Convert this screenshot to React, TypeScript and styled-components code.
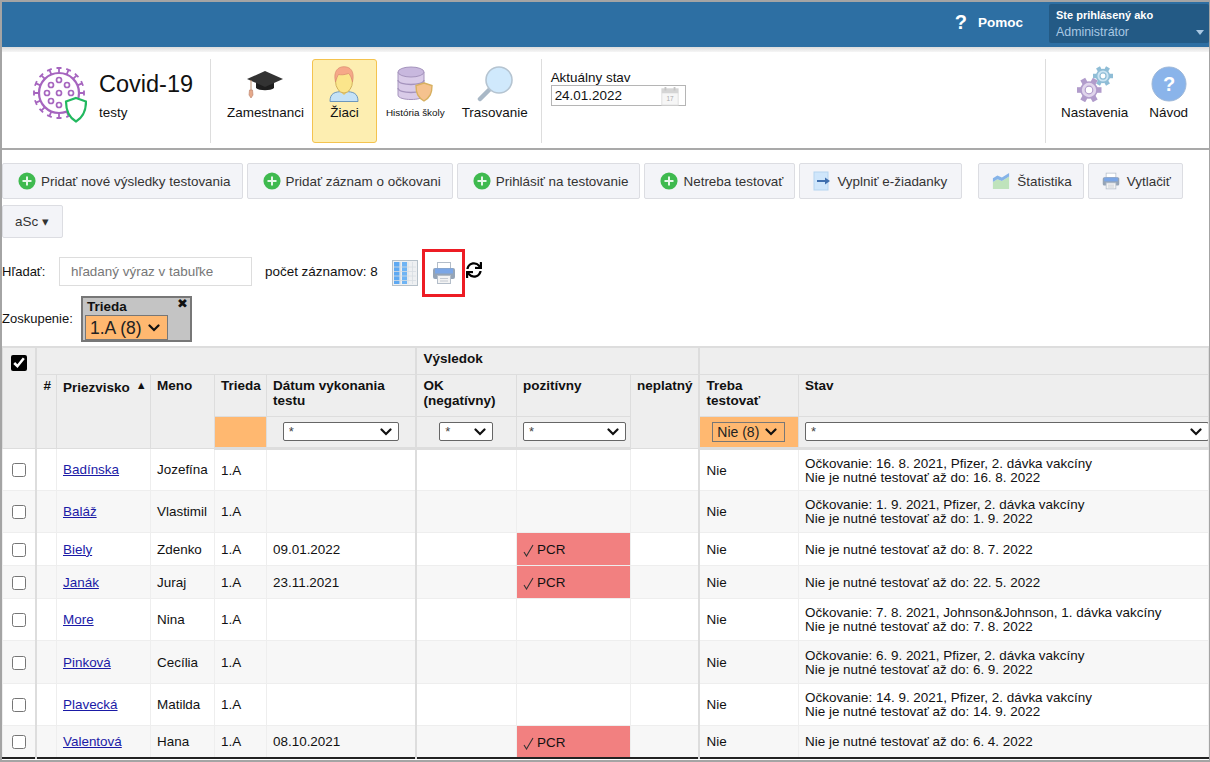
import React from "react";
import styled, { createGlobalStyle } from "styled-components";
import { FaSync } from "react-icons/fa";

const chevron = `url("data:image/svg+xml,%3Csvg xmlns='http://www.w3.org/2000/svg' width='12' height='8' viewBox='0 0 12 8'%3E%3Cpath d='M1.500 1.500L6 6l4.500-4.500' fill='none' stroke='%23111' stroke-width='2.200' stroke-linecap='round'/%3E%3C/svg%3E")`;

const Global = createGlobalStyle`
  html, body { margin: 0; padding: 0; height: 100%; overflow: hidden; background: #fff; }
  body { font-family: "Liberation Sans", Arial, sans-serif; font-size: 13.45px; color: #111; }
  * { box-sizing: border-box; }
`;

const Frame = styled.div`
  width: 1210px; height: 762px; overflow: hidden;
  border-top: 2px solid #a4a4a4; border-left: 2px solid #a4a4a4; border-right: 1px solid #a4a4a4; border-bottom: 2px solid #a4a4a4;
  display: flex; flex-direction: column; background: #fff;
`;
const TopBar = styled.div`
  height: 45px; flex: none; background: #2d6fa3; display: flex; align-items: flex-start; justify-content: flex-end;
`;
const HelpLink = styled.div`
  display: flex; align-items: center; height: 41px; color: #fff; font-weight: bold; font-size: 13.5px; margin-right: 26px; gap: 11px;
`;
const HelpMark = styled.span` font-size: 20px; `;
const UserBox = styled.div`
  width: 160px; height: 39px; margin-top: 2px; background: #235a85; border-radius: 2px; padding: 4px 0 0 7px; position: relative;
`;
const UserTitle = styled.div` color: #fff; font-size: 11px; font-weight: bold; line-height: 15px; `;
const UserName = styled.div` color: #a9c8e3; font-size: 12.4px; line-height: 17px; margin-top: 1px; `;
const UserArrow = styled.span`
  position: absolute; right: 5px; bottom: 8px; width: 0; height: 0;
  border-left: 4.500px solid transparent; border-right: 4.500px solid transparent; border-top: 5px solid #a9c8e3;
`;
const TopShade = styled.div`
  height: 5px; flex: none; background: linear-gradient(#dcdcdc, #f6f6f6);
`;
const Header = styled.div`
  height: 98px; flex: none; display: flex; padding: 7px 0 5px 0; border-bottom: 2px solid #a9a9a9;
`;
const LogoBlock = styled.div`
  width: 209px; flex: none; border-right: 1px solid #ddd; display: flex; padding: 8px 0 0 31px; gap: 12px;
`;
const LogoText = styled.div` display: flex; flex-direction: column; `;
const AppTitle = styled.div` font-size: 23.5px; line-height: 28px; margin-top: 3px; color: #111; `;
const AppSub = styled.div` font-size: 13.45px; line-height: 16px; margin-top: 7px; `;
const Nav = styled.div`
  display: flex; padding: 0 5px 0 8px; border-right: 1px solid #ddd;
`;
const NavItem = styled.div<{ $active?: boolean; $roomy?: boolean }>`
  display: flex; flex-direction: column; align-items: center; padding: 5px ${(p) => (p.$roomy ? "8px" : "7px")} 0; min-width: 65px;
  border: 1px solid ${(p) => (p.$active ? "#f4c34f" : "transparent")};
  border-radius: 3px; background: ${(p) => (p.$active ? "#fdeeb1" : "transparent")};
`;
const NavIcon = styled.div` height: 37px; display: flex; align-items: center; justify-content: center; `;
const NavLabel = styled.div<{ $small?: boolean }>`
  font-size: ${(p) => (p.$small ? "9.9px" : "13.45px")}; line-height: 16px; margin-top: 3px; white-space: nowrap; color: #111;
`;
const DateBlock = styled.div` padding: 11px 0 0 9px; flex: 1; `;
const DateLabel = styled.div` font-size: 13.45px; line-height: 15px; `;
const DateBox = styled.div`
  width: 135px; height: 21px; border: 1px solid #b5b5b5; display: flex; align-items: center; justify-content: space-between; padding: 0 5px 0 3px; font-size: 13.45px;
`;
const SideNav = styled.div`
  display: flex; border-left: 1px solid #ddd; padding-left: 15px; width: 164px; flex: none; gap: 21px;
`;
const SideItem = styled.div` display: flex; flex-direction: column; align-items: center; padding-top: 6px; `;

const Toolbar = styled.div`
  display: flex; flex-wrap: wrap; gap: 6px 4px; padding-top: 13px; width: 1200px; flex: none;
`;
const ToolButton = styled.div<{ $gapBefore?: boolean; $tight?: boolean; $wide?: boolean }>`
  height: 36px; display: flex; align-items: center; gap: ${(p) => (p.$tight ? "7px" : "5px")};
  padding: 0 ${(p) => (p.$wide ? "14px" : "11px")} 0 ${(p) => (p.$tight ? "13px" : "15px")};
  background: #f3f4f8; border: 1px solid #dcdde2; border-radius: 2px; color: #333; font-size: 13.45px; white-space: nowrap;
  margin-left: ${(p) => (p.$gapBefore ? "12px" : "0")};
`;
const AscButton = styled(ToolButton)` height: 33px; padding: 0 12px; width: 61px; `;
const DocIconWrap = styled.span` display: flex; margin-left: -3px; `;

const SearchRow = styled.div`
  display: flex; align-items: center; height: 48px; margin-top: 11px; flex: none;
`;
const SearchLabel = styled.span` width: 57px; font-size: 13px; margin-bottom: 3px; `;
const SearchInput = styled.input`
  width: 193px; height: 29px; border: 1px solid #ddd; padding: 0 11px; margin-bottom: 3px; font: 13.45px "Liberation Sans", Arial, sans-serif;
  &::placeholder { color: #777; }
`;
const Count = styled.span` margin-left: 13px; width: 127px; font-size: 13.45px; white-space: nowrap; margin-bottom: 3px; `;
const PrintFrame = styled.div`
  width: 43px; height: 48px; margin-left: 4px; border: 3px solid #ed1c24; display: flex; align-items: center; justify-content: center;
`;
const RefreshWrap = styled.div` margin-left: 1px; display: flex; margin-top: -6px; `;

const GroupRow = styled.div` display: flex; align-items: center; height: 46px; margin-top: -1px; flex: none; `;
const GroupLabel = styled.span` width: 79px; font-size: 13px; margin-bottom: 2px; `;
const GroupBox = styled.div`
  width: 111px; height: 46px; background: #c4c4c4; border: 2px solid #777; padding: 1px 2px 0; position: relative;
`;
const GroupTitle = styled.div` font-size: 13.5px; font-weight: bold; line-height: 16px; padding-left: 2px; `;
const GroupClose = styled.span` position: absolute; right: 2px; top: -2px; font-size: 13px; font-weight: bold; font-family: "DejaVu Sans", sans-serif; `;
const OrangeSelect = styled.select<{ $big?: boolean }>`
  appearance: none; background: #ffb870 ${chevron} no-repeat right 7px center; border: 1px solid #777; border-radius: 0; color: #222;
  font: ${(p) => (p.$big ? "17.5px" : "14px")} "Liberation Sans", Arial, sans-serif;
  height: ${(p) => (p.$big ? "25px" : "20px")}; width: ${(p) => (p.$big ? "83px" : "73px")};
  display: block; padding: 0 0 0 4px;
`;

const Table = styled.table`
  border-collapse: collapse; table-layout: fixed; width: 1206px; margin-top: 4px; flex: none;
  border-top: 2px solid #ddd; border-bottom: 2px solid #222;
`;
const Th = styled.th<{ $thick?: boolean; $orange?: boolean; $center?: boolean }>`
  background: ${(p) => (p.$orange ? "#ffb870" : "#eee")};
  border: 1px solid #ddd;
  ${(p) => (p.$thick ? "border-left: 2px solid #ddd;" : "")}
  font-size: 13.5px; line-height: 15px; font-weight: bold; text-align: ${(p) => (p.$center ? "center" : "left")};
  vertical-align: top; padding: 3px 6px 0 ${(p) => (p.$thick ? "7px" : "6px")}; color: #111; overflow: hidden; white-space: nowrap;
`;
const FilterTh = styled(Th)` vertical-align: middle; text-align: center; padding: 0 6px; `;
const BottomRule = styled.tr` height: 32px; & > th { border-bottom: 3px solid #ddd; } `;
const SortMark = styled.span` font-size: 11px; margin-left: 6px; vertical-align: 3px; `;
const HeadRowOne = styled.tr` height: 27px; `;
const HeadRowTwo = styled.tr` height: 42px; `;
const Row = styled.tr<{ $zebra: boolean; $h: number }>`
  height: ${(p) => p.$h}px; background: ${(p) => (p.$zebra ? "#f7f7f7" : "#fff")};
`;
const Td = styled.td<{ $thick?: boolean; $red?: boolean }>`
  border: 1px solid #eee;
  ${(p) => (p.$thick ? "border-left: 2px solid #ddd;" : "")}
  ${(p) => (p.$red ? "background: #f28080;" : "")}
  padding: ${(p) => (p.$red ? "6px" : "2px")} 6px 0 ${(p) => (p.$thick ? "7px" : "6px")};
  font-size: 13.45px; line-height: 14px; vertical-align: middle; white-space: nowrap; overflow: hidden;
`;
const PcrMark = styled.span` display: inline-flex; align-items: center; gap: 3px; `;
const NameLink = styled.a` color: #1a1aa6; text-decoration: underline; `;
const HeadCheck = styled.input`
  width: 16px; height: 16px; accent-color: #000; display: block; margin: 4px auto 0;
`;
const RowCheck = styled.input` width: 14px; height: 14px; margin: 0 auto; display: block; `;
const FilterSelect = styled.select<{ $w: number }>`
  appearance: none; width: ${(p) => p.$w}px; height: 19px; font: 13px "Liberation Sans", Arial, sans-serif; color: #444; padding: 0 0 0 5px;
  background: #fff ${chevron} no-repeat right 6px center; border: 1px solid #666; border-radius: 2px; display: inline-block; vertical-align: middle;
`;
const CenteredOrange = styled(OrangeSelect)` margin: 0 auto; `;

const Plus = () => (
  <svg width="18" height="18" viewBox="0 0 20 20">
    <circle cx="10" cy="10" r="9.500" fill="#3fba4f" />
    <path d="M10 5v10M5 10h10" stroke="#e8f8ea" strokeWidth="2.200" />
  </svg>
);
const Printer = ({ s = 24 }: { s?: number }) => (
  <svg width={s} height={s} viewBox="0 0 24 24">
    <rect x="5.500" y="1.500" width="13" height="6" fill="#fff" stroke="#b3bdc9" />
    <rect x="1" y="7" width="22" height="11" rx="2" fill="#95a4b6" />
    <rect x="3" y="7.500" width="18" height="5" fill="#7ba6e6" />
    <rect x="5.500" y="14.500" width="13" height="8" fill="#f3f3f3" stroke="#b3bdc9" />
    <path d="M8 17.500h8M8 20h8" stroke="#c4c9d1" />
  </svg>
);
const Logo = () => {
  const spikes = Array.from({ length: 16 }, (_, i) => (i * 360) / 16);
  const dots: [number, number][] = [[26, 13], [18, 18], [34, 18], [14, 26], [26, 26], [38, 26], [18, 34], [26, 38]];
  return (
    <svg width="54" height="56" viewBox="0 0 54 56">
      {spikes.map((a) => (
        <g key={a} transform={`rotate(${a} 26 26)`} stroke="#a665bf" strokeWidth="1.800" fill="none">
          <path d="M26 6V1M23.500 1h5" />
        </g>
      ))}
      <circle cx="26" cy="26" r="20" fill="#fff" stroke="#a665bf" strokeWidth="2.200" />
      {dots.map(([x, y]) => (
        <circle key={`${x}-${y}`} cx={x} cy={y} r="2.500" fill="none" stroke="#a665bf" strokeWidth="1.700" />
      ))}
      <path d="M43 31l10 3.500c0 10-3 16-10 20c-7-4-10-10-10-20z" fill="#fff" stroke="#22b85f" strokeWidth="2.200" />
    </svg>
  );
};
const Cap = () => (
  <svg width="36" height="28" viewBox="0 0 36 28">
    <path d="M9 11v7c3 3 15 3 18 0v-7z" fill="#1e1e1e" />
    <path d="M18 1L36 9 18 17 0 9z" fill="#333" />
    <path d="M4 10v11" stroke="#b98b6b" strokeWidth="1" />
    <path d="M2.500 20h3l.5 5-2 3-2-3z" fill="#e6a98a" stroke="#b9806a" strokeWidth=".6" />
  </svg>
);
const Person = () => (
  <svg width="30" height="36" viewBox="0 0 30 36">
    <path d="M1 35.500c0-8 4-10 14-10s14 2 14 10z" fill="#c5e2f7" stroke="#6d97bb" />
    <path d="M9 24l6 5 6-5z" fill="#e5c770" />
    <ellipse cx="15" cy="15" rx="8.500" ry="12" fill="#fbe58b" stroke="#d1b25e" />
    <path d="M6.500 16C4 5 9 .7 15 .7c6 0 11 4 8.500 15.300-1-4-2-7-4-8.500-4 1.500-8 1.500-10 1-1 1.500-2 4-3 7.500z" fill="#f6a888" stroke="#d88a6f" strokeWidth=".7" />
  </svg>
);
const Database = () => (
  <svg width="36" height="36" viewBox="0 0 36 36">
    <path d="M1 6v23c0 6 26 6 26 0V6z" fill="#d9cbe8" stroke="#a594bd" />
    <ellipse cx="14" cy="6" rx="13" ry="5" fill="#c8b8de" stroke="#a594bd" />
    <path d="M1 14c0 6 26 6 26 0M1 22c0 6 26 6 26 0" fill="none" stroke="#a594bd" strokeWidth="1.300" />
    <path d="M27 17l8 2.500c0 8-2 12-8 15.500-6-3.500-8-7.500-8-15.500z" fill="#f5c28e" stroke="#d7b060" strokeWidth="1.400" />
  </svg>
);
const Magnifier = () => (
  <svg width="36" height="36" viewBox="0 0 36 36">
    <path d="M13 23L3 33" stroke="#a9b8c6" strokeWidth="4.500" strokeLinecap="round" />
    <circle cx="22" cy="14" r="13" fill="#d0e9fc" stroke="#b5c4d1" strokeWidth="1.600" />
  </svg>
);
const gear = (cx: number, cy: number, r: number, fill: string, stroke: string) => {
  const teeth = Array.from({ length: 6 }, (_, i) => i * 60);
  return (
    <g>
      {teeth.map((a) => (
        <rect key={a} x={cx - r * 0.28} y={cy - r * 1.25} width={r * 0.56} height={r * 0.6} fill={stroke} transform={`rotate(${a + 30} ${cx} ${cy})`} />
      ))}
      <circle cx={cx} cy={cy} r={r * 0.8} fill={fill} stroke={stroke} strokeWidth="1.600" />
      <circle cx={cx} cy={cy} r={r * 0.38} fill="#fff" stroke={stroke} strokeWidth="1.200" />
    </g>
  );
};
const Gears = () => (
  <svg width="36" height="36" viewBox="0 0 36 36">
    {gear(26, 10, 8, "#cbe4f3", "#8fbdd6")}
    {gear(12, 24, 10, "#e0d5ec", "#b19ccb")}
  </svg>
);
const HelpCircle = () => (
  <svg width="36" height="36" viewBox="0 0 36 36">
    <circle cx="18" cy="18" r="17" fill="#8ab4ea" stroke="#9db7d8" />
    <text x="18" y="25" textAnchor="middle" fill="#fff" fontSize="20" fontWeight="bold" fontFamily="Liberation Sans">?</text>
  </svg>
);
const Calendar = () => (
  <svg width="20" height="20" viewBox="0 0 20 22">
    <rect x="1" y="3" width="18" height="18" fill="#f6f6f6" stroke="#ddd" />
    <rect x="1" y="3" width="18" height="5" fill="#d5d5d5" />
    <path d="M5 1v4M15 1v4" stroke="#c5c5c5" strokeWidth="2" />
    <text x="10" y="17" textAnchor="middle" fontSize="7" fill="#aaa" fontFamily="Liberation Sans">17</text>
  </svg>
);
const ArrowDoc = () => (
  <svg width="20" height="20" viewBox="0 0 20 20">
    <rect x="2" y="1" width="14" height="18" fill="#cfe6fb" stroke="#b5d4ef" />
    <path d="M5 10h10" stroke="#3f6fae" strokeWidth="2" />
    <path d="M13 6.500l5 3.500-5 3.500z" fill="#3f6fae" />
  </svg>
);
const ChartArea = () => (
  <svg width="18" height="18" viewBox="0 0 20 20">
    <path d="M1 19v-8l5-3 5 2 8-5v14z" fill="#bfe3bc" />
    <path d="M1 11V7l5-3 5 2 8-5v4l-8 5-5-2-5 3z" fill="#85b3e8" />
  </svg>
);
const GridIcon = () => (
  <svg width="26" height="26" viewBox="0 0 26 26">
    <rect x=".5" y=".5" width="25" height="25" fill="#eef0f2" stroke="#b5c0c9" />
    <rect x="2" y="2" width="5.500" height="22" fill="#5ea9f2" />
    <rect x="10" y="2" width="5" height="22" fill="#6fb4f4" />
    <path d="M2 7h22M2 11.500h22M2 16h22M2 20.500h22M8.500 2v22M16 2v22M20.500 2v22" stroke="#d7dde2" strokeWidth=".8" />
  </svg>
);
const ThinCheck = () => (
  <svg width="11" height="13" viewBox="0 0 11 13">
    <path d="M1 8l2.500 4L10 1" fill="none" stroke="#333" strokeWidth="1.100" />
  </svg>
);

type Data = { last: string; first: string; date?: string; pcr?: boolean; vax?: string; until: string; h: number };
const rows: Data[] = [
  { last: "Badínska", first: "Jozefína", vax: "16. 8. 2021, Pfizer, 2. dávka vakcíny", until: "16. 8. 2022", h: 42 },
  { last: "Baláž", first: "Vlastimil", vax: "1. 9. 2021, Pfizer, 2. dávka vakcíny", until: "1. 9. 2022", h: 42 },
  { last: "Biely", first: "Zdenko", date: "09.01.2022", pcr: true, until: "8. 7. 2022", h: 33 },
  { last: "Janák", first: "Juraj", date: "23.11.2021", pcr: true, until: "22. 5. 2022", h: 33 },
  { last: "More", first: "Nina", vax: "7. 8. 2021, Johnson&Johnson, 1. dávka vakcíny", until: "7. 8. 2022", h: 42 },
  { last: "Pinková", first: "Cecília", vax: "6. 9. 2021, Pfizer, 2. dávka vakcíny", until: "6. 9. 2022", h: 43 },
  { last: "Plavecká", first: "Matilda", vax: "14. 9. 2021, Pfizer, 2. dávka vakcíny", until: "14. 9. 2022", h: 42 },
  { last: "Valentová", first: "Hana", date: "08.10.2021", pcr: true, until: "6. 4. 2022", h: 33 },
];
const widths = [33, 21, 94, 64, 52, 149, 101, 114, 68, 100, 410];

export default function App() {
  return (
    <Frame>
      <Global />
      <TopBar>
        <HelpLink><HelpMark>?</HelpMark>Pomoc</HelpLink>
        <UserBox>
          <UserTitle>Ste prihlásený ako</UserTitle>
          <UserName>Administrátor</UserName>
          <UserArrow />
        </UserBox>
      </TopBar>
      <TopShade />
      <Header>
        <LogoBlock>
          <Logo />
          <LogoText>
            <AppTitle>Covid-19</AppTitle>
            <AppSub>testy</AppSub>
          </LogoText>
        </LogoBlock>
        <Nav>
          <NavItem><NavIcon><Cap /></NavIcon><NavLabel>Zamestnanci</NavLabel></NavItem>
          <NavItem $active><NavIcon><Person /></NavIcon><NavLabel>Žiaci</NavLabel></NavItem>
          <NavItem $roomy><NavIcon><Database /></NavIcon><NavLabel $small>História školy</NavLabel></NavItem>
          <NavItem><NavIcon><Magnifier /></NavIcon><NavLabel>Trasovanie</NavLabel></NavItem>
        </Nav>
        <DateBlock>
          <DateLabel>Aktuálny stav</DateLabel>
          <DateBox>24.01.2022<Calendar /></DateBox>
        </DateBlock>
        <SideNav>
          <SideItem><NavIcon><Gears /></NavIcon><NavLabel>Nastavenia</NavLabel></SideItem>
          <SideItem><NavIcon><HelpCircle /></NavIcon><NavLabel>Návod</NavLabel></SideItem>
        </SideNav>
      </Header>
      <Toolbar>
        <ToolButton><Plus />Pridať nové výsledky testovania</ToolButton>
        <ToolButton><Plus />Pridať záznam o očkovani</ToolButton>
        <ToolButton><Plus />Prihlásiť na testovanie</ToolButton>
        <ToolButton><Plus />Netreba testovať</ToolButton>
        <ToolButton $wide><DocIconWrap><ArrowDoc /></DocIconWrap>Vyplniť e-žiadanky</ToolButton>
        <ToolButton $gapBefore $tight><ChartArea />Štatistika</ToolButton>
        <ToolButton $tight><Printer s={18} />Vytlačiť</ToolButton>
        <AscButton>aSc ▾</AscButton>
      </Toolbar>
      <SearchRow>
        <SearchLabel>Hľadať:</SearchLabel>
        <SearchInput placeholder="hľadaný výraz v tabuľke" />
        <Count>počet záznamov: 8</Count>
        <GridIcon />
        <PrintFrame><Printer /></PrintFrame>
        <RefreshWrap><FaSync size={16} color="#000" /></RefreshWrap>
      </SearchRow>
      <GroupRow>
        <GroupLabel>Zoskupenie:</GroupLabel>
        <GroupBox>
          <GroupTitle>Trieda</GroupTitle>
          <GroupClose>✖</GroupClose>
          <OrangeSelect $big><option>1.A (8)</option></OrangeSelect>
        </GroupBox>
      </GroupRow>
      <Table>
        <colgroup>
          {widths.map((w, i) => <col key={i} style={{ width: w }} />)}
        </colgroup>
        <thead>
          <HeadRowOne>
            <Th rowSpan={3} $center><HeadCheck type="checkbox" defaultChecked /></Th>
            <Th colSpan={5} $thick />
            <Th colSpan={3} $thick>Výsledok</Th>
            <Th colSpan={2} $thick />
          </HeadRowOne>
          <HeadRowTwo>
            <Th rowSpan={2} $thick>#</Th>
            <Th rowSpan={2}>Priezvisko<SortMark>▲</SortMark></Th>
            <Th rowSpan={2}>Meno</Th>
            <Th>Trieda</Th>
            <Th>Dátum vykonania<br />testu</Th>
            <Th $thick>OK<br />(negatívny)</Th>
            <Th>pozitívny</Th>
            <Th rowSpan={2}>neplatný</Th>
            <Th $thick>Treba<br />testovať</Th>
            <Th>Stav</Th>
          </HeadRowTwo>
          <BottomRule>
            <FilterTh $orange />
            <FilterTh><FilterSelect $w={116}><option>*</option></FilterSelect></FilterTh>
            <FilterTh $thick><FilterSelect $w={54}><option>*</option></FilterSelect></FilterTh>
            <FilterTh><FilterSelect $w={103}><option>*</option></FilterSelect></FilterTh>
            <FilterTh $thick $orange><CenteredOrange><option>Nie (8)</option></CenteredOrange></FilterTh>
            <FilterTh><FilterSelect $w={404}><option>*</option></FilterSelect></FilterTh>
          </BottomRule>
        </thead>
        <tbody>
          {rows.map((r, i) => (
            <Row key={r.last} $zebra={i % 2 === 1} $h={r.h}>
              <Td><RowCheck type="checkbox" /></Td>
              <Td $thick />
              <Td><NameLink href="#">{r.last}</NameLink></Td>
              <Td>{r.first}</Td>
              <Td>1.A</Td>
              <Td>{r.date}</Td>
              <Td $thick />
              <Td $red={r.pcr}>{r.pcr && <PcrMark><ThinCheck />PCR</PcrMark>}</Td>
              <Td />
              <Td $thick>Nie</Td>
              <Td>
                {r.vax && <>Očkovanie: {r.vax}<br /></>}
                Nie je nutné testovať až do: {r.until}
              </Td>
            </Row>
          ))}
        </tbody>
      </Table>
    </Frame>
  );
}
